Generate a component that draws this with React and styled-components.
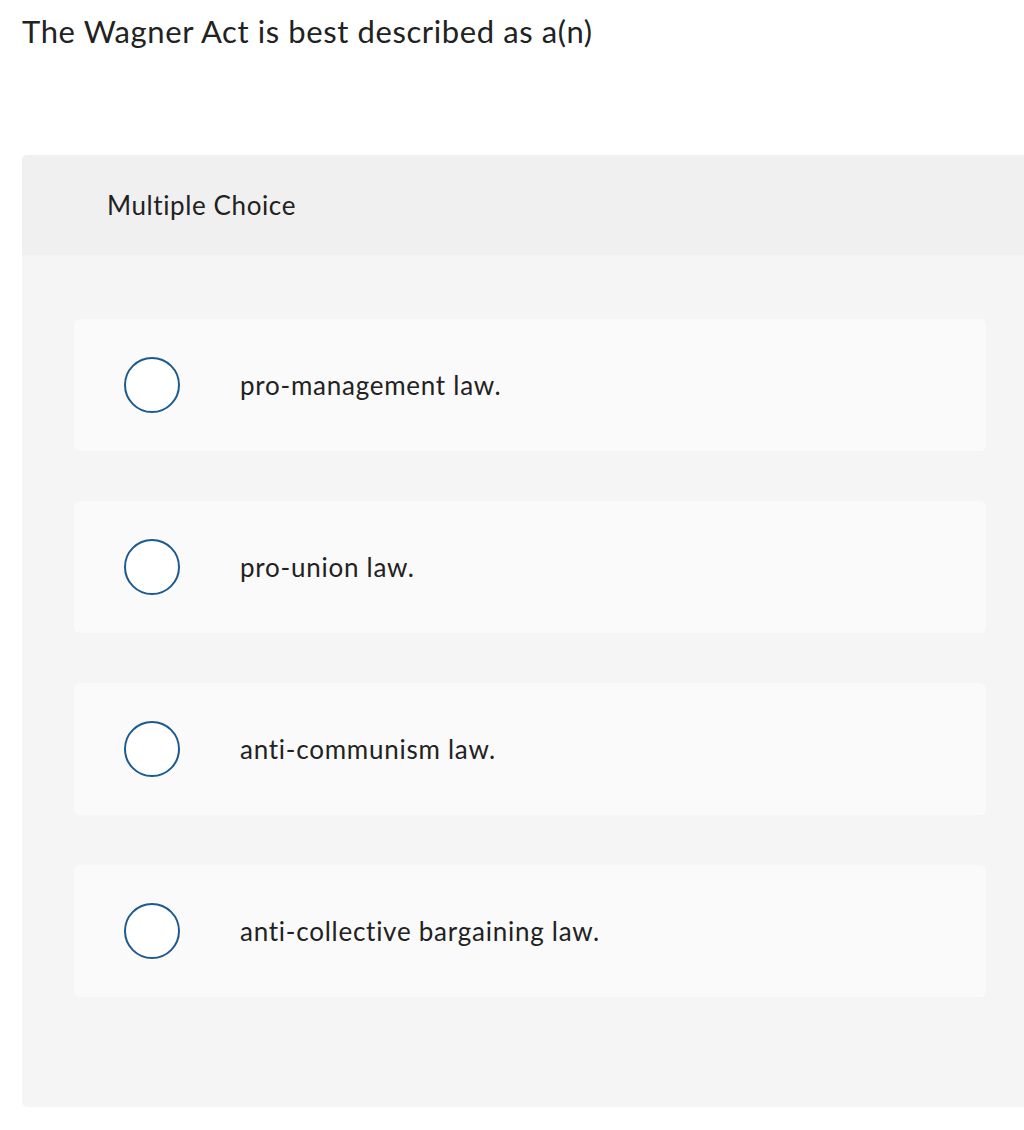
import React from "react";
import styled, { createGlobalStyle } from "styled-components";

const GlobalStyle = createGlobalStyle`
	body {
		margin: 0;
		background: #fff;
		font-family: Lato, "Open Sans", Arial, sans-serif;
		color: #222;
		overflow: hidden;
	}
`;

const options = [
	"pro-management law.",
	"pro-union law.",
	"anti-communism law.",
	"anti-collective bargaining law.",
];

const App = () => {
	return (
		<Page>
			<GlobalStyle />
			<Question>The Wagner Act is best described as a(n)</Question>
			<Panel>
				<PanelHeader>Multiple Choice</PanelHeader>
				<OptionList>
					{options.map((option, i) => (
						<Option key={i}>
							<Radio />
							<OptionText>{option}</OptionText>
						</Option>
					))}
				</OptionList>
			</Panel>
		</Page>
	);
};

export default App;

const Page = styled.div`
	padding: 13px 0 0 22px;
	width: 1060px;
	height: 1130px;
	box-sizing: border-box;
`;

const Question = styled.h1`
	margin: 0;
	font-size: 31px;
	font-weight: 400;
	letter-spacing: 0.6px;
	line-height: 37px;
	color: #222;
`;

const Panel = styled.div`
	margin-top: 105px;
	background: #f5f5f5;
	border-radius: 5px;
	overflow: hidden;
`;

const PanelHeader = styled.div`
	height: 100px;
	display: flex;
	align-items: center;
	padding-left: 85px;
	background: #f0f0f0;
	font-size: 26px;
	letter-spacing: 0.6px;
	color: #222;
`;

const OptionList = styled.div`
	display: flex;
	flex-direction: column;
	gap: 50px;
	padding: 64px 0 110px 52px;
`;

const Option = styled.div`
	width: 912px;
	height: 132px;
	box-sizing: border-box;
	display: flex;
	align-items: center;
	padding-left: 50px;
	background: #fafafa;
	border-radius: 6px;
`;

const Radio = styled.span`
	width: 56px;
	height: 56px;
	box-sizing: border-box;
	border: 2px solid #1d5a8f;
	border-radius: 50%;
	background: #fff;
	flex-shrink: 0;
`;

const OptionText = styled.span`
	margin-left: 60px;
	font-size: 26px;
	letter-spacing: 0.75px;
	color: #222;
`;
